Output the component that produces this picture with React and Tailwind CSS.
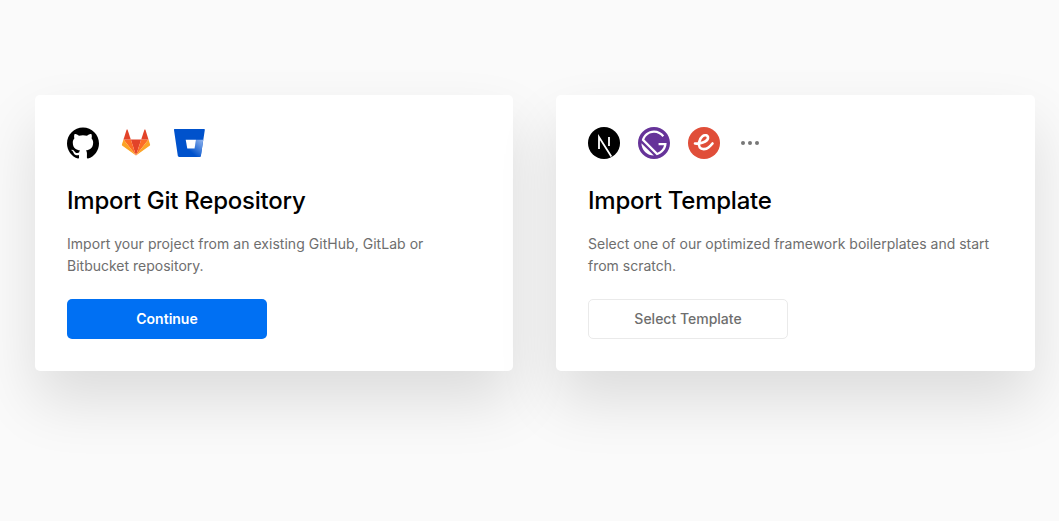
import { SiGithub, SiGatsby } from "react-icons/si";

function GitlabLogo() {
  return (
    <svg width="32" height="32" viewBox="0 1.5 32 32">
      <path d="M16 30 L21.2 14 H10.8 Z" fill="#e24329" />
      <path d="M16 30 L10.8 14 H3.5 Z" fill="#fc6d26" />
      <path d="M3.5 14 L1.9 18.9 C1.8 19.4 1.9 19.9 2.4 20.2 L16 30 Z" fill="#fca326" />
      <path d="M3.5 14 H10.8 L7.6 4.3 C7.4 3.8 6.8 3.8 6.6 4.3 Z" fill="#e24329" />
      <path d="M16 30 L21.2 14 H28.5 Z" fill="#fc6d26" />
      <path d="M28.5 14 L30.1 18.9 C30.2 19.4 30.1 19.9 29.6 20.2 L16 30 Z" fill="#fca326" />
      <path d="M28.5 14 H21.2 L24.4 4.3 C24.6 3.8 25.2 3.8 25.4 4.3 Z" fill="#e24329" />
    </svg>
  );
}

function BitbucketLogo() {
  return (
    <svg width="32" height="32" viewBox="0 0 32 32">
      <defs>
        <linearGradient id="bb" gradientUnits="userSpaceOnUse" x1="31" y1="12" x2="19" y2="26">
          <stop offset="0" stopColor="#9dbcf0" />
          <stop offset="1" stopColor="#0052cc" />
        </linearGradient>
      </defs>
      <path d="M1.8 2 H31 C31.5 2 31.9 2.4 31.8 3 L27.9 28.8 C27.8 29.5 27.3 30 26.6 30 H6.2 C5.5 30 4.9 29.5 4.8 28.8 L1 3 C0.9 2.4 1.3 2 1.8 2 Z" fill="#0052cc" />
      <path d="M30.2 12.7 L27.9 28.8 C27.8 29.5 27.3 30 26.6 30 H9 L13.6 21.5 H21.6 L23 12.7 Z" fill="url(#bb)" />
      <path d="M12.7 12.7 H23 L21.6 21.5 H14.3 Z" fill="#fff" />
    </svg>
  );
}

function NextLogo() {
  return (
    <svg width="32" height="32" viewBox="0 0 32 32">
      <circle cx="16" cy="16" r="16" fill="#000" />
      <path d="M11 22 V10 L23.3 29.4" fill="none" stroke="#fff" strokeWidth="1.8" />
      <path d="M21 10 V19" fill="none" stroke="#fff" strokeWidth="1.8" />
    </svg>
  );
}

function EmberLogo() {
  return (
    <svg width="32" height="32" viewBox="0 0 32 32">
      <circle cx="16" cy="16" r="16" fill="#e04e39" />
      <path
        d="M7 16.5 C11 17 19.5 15 20 11 C20.2 8 16.5 7.5 14.5 9.2 C11 12 10 18 11.8 20.5 C13.5 22.8 18 22.5 20.5 20.5 C22 19.3 23.3 18 24.5 16.5"
        fill="none"
        stroke="#fff"
        strokeWidth="2.6"
        strokeLinecap="round"
      />
    </svg>
  );
}

function Card({ icons, title, children, action }) {
  return (
    <div className="h-[276px] rounded-[5px] bg-white p-8 shadow-[0_30px_60px_rgba(0,0,0,0.12)]">
      <div className="flex h-8 items-center">{icons}</div>
      <h2 className="mt-6 text-2xl leading-[36px] font-medium tracking-[-0.24px] text-black">{title}</h2>
      <p className="mt-[14px] text-sm leading-[22px] text-[#6e6e6e]">{children}</p>
      <div className="mt-[22px]">{action}</div>
    </div>
  );
}

export default function App() {
  return (
    <div className="grid min-h-[521px] grid-cols-[478px_479px] items-start gap-[43px] bg-[#fafafa] pt-[95px] pl-[35px] font-['Inter',sans-serif]">
      <Card
        icons={
          <div className="flex items-center gap-[21px]">
            <SiGithub size={32} color="#000" />
            <GitlabLogo />
            <BitbucketLogo />
          </div>
        }
        title="Import Git Repository"
        action={
          <button className="h-10 w-[200px] rounded-[5px] bg-[#0070f3] text-sm font-semibold text-white">
            Continue
          </button>
        }
      >
        <span className="tracking-[0.035px]">Import your project from an existing GitHub, GitLab or</span>
        <br />
        Bitbucket repository.
      </Card>
      <Card
        icons={
          <div className="flex items-center gap-[18px]">
            <NextLogo />
            <SiGatsby size={32} color="#663399" />
            <EmberLogo />
            <div className="ml-[3px] flex gap-[3px]">
              <span className="h-1 w-1 rounded-full bg-[#777]" />
              <span className="h-1 w-1 rounded-full bg-[#777]" />
              <span className="h-1 w-1 rounded-full bg-[#777]" />
            </div>
          </div>
        }
        title="Import Template"
        action={
          <button className="h-10 w-[200px] rounded-[5px] border border-[#eaeaea] bg-white text-sm font-medium text-[#6e6e6e]">
            Select Template
          </button>
        }
      >
        Select one of our optimized framework boilerplates and start
        <br />
        from scratch.
      </Card>
    </div>
  );
}
